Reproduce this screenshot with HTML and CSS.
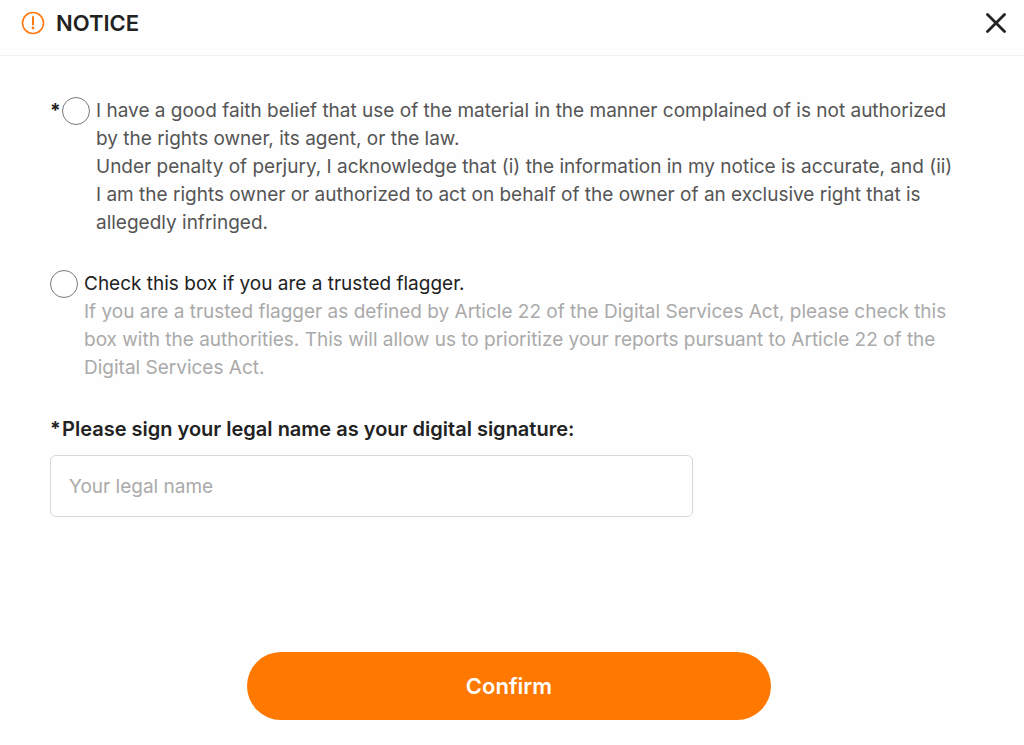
FILE: index.html
```html
<!DOCTYPE html>
<html lang="en">

<head>
    <meta charset="UTF-8">
    <meta name="viewport" content="width=device-width, initial-scale=1.0">
    <title>Notice</title>
    <link rel="stylesheet" href="styles.css">
</head>

<body>
    <div class="dialog" role="dialog" aria-labelledby="noticeTitle">
        <div class="header">
            <svg class="noticeIcon" viewBox="0 0 24 24" aria-hidden="true">
                <circle cx="12" cy="12" r="10.5" fill="none" stroke="#ff7a14" stroke-width="1.6" />
                <path d="M12 6v7.5" stroke="#ff7a14" stroke-width="2" stroke-linecap="round" />
                <circle cx="12" cy="17" r="1.4" fill="#ff7a14" />
            </svg>
            <h1 class="title" id="noticeTitle">NOTICE</h1>
            <button class="closeBtn" type="button" aria-label="Close">
                <svg viewBox="0 0 20 20" aria-hidden="true">
                    <path d="M1.5 1.5l17 17M18.5 1.5l-17 17" stroke="#222" stroke-width="2.8" stroke-linecap="round" />
                </svg>
            </button>
        </div>

        <form class="content">
            <div class="option">
                <span class="star">*</span>
                <input class="check" type="checkbox" id="goodFaith" required>
                <label class="statement" for="goodFaith">
                    I have a good faith belief that use of the material in the manner complained of is not authorized by the rights owner, its agent, or the law.<br>
                    Under penalty of perjury, I acknowledge that (i) the information in my notice is accurate, and (ii) I am the rights owner or authorized to act on behalf of the owner of an exclusive right that is allegedly infringed.
                </label>
            </div>

            <div class="option">
                <input class="check" type="checkbox" id="flagger" aria-describedby="flaggerHint">
                <div class="flagger">
                    <label class="flaggerLabel" for="flagger">Check this box if you are a trusted flagger.</label>
                    <p class="hint" id="flaggerHint">If you are a trusted flagger as defined by Article 22 of the Digital Services Act, please check this box with the authorities. This will allow us to prioritize your reports pursuant to Article 22 of the Digital Services Act.</p>
                </div>
            </div>

            <div class="signature">
                <div class="signatureTitle">
                    <span class="star">*</span>
                    <label for="legalName">Please sign your legal name as your digital signature:</label>
                </div>
                <input class="nameInput" type="text" id="legalName" placeholder="Your legal name" required>
            </div>

            <button class="confirmBtn" type="submit">Confirm</button>
        </form>
    </div>
</body>

</html>
```
FILE: styles.css
```css
* {
    margin: 0;
    padding: 0;
    box-sizing: border-box;
}

body {
    font-family: Inter, "Liberation Sans", sans-serif;
    font-size: 19px;
    line-height: 28px;
    color: #222;
    background-color: #fefefe;
}

.header {
    display: flex;
    align-items: center;
    padding: 9px 18px 18px 21px;
    border-bottom: 1px solid #f2f2f2;
}

.noticeIcon {
    width: 24px;
    height: 24px;
}

.title {
    margin-left: 11px;
    font-size: 22px;
    line-height: 28px;
    font-weight: 600;
}

.closeBtn {
    width: 20px;
    height: 20px;
    margin-left: auto;
    border: none;
    background: none;
    cursor: pointer;
}

.closeBtn svg {
    display: block;
    width: 100%;
}

.content {
    padding: 41px 56px 24px 50px;
}

.option {
    display: flex;
    align-items: flex-start;
    margin-bottom: 33px;
}

.star {
    width: 12px;
    flex-shrink: 0;
    font-size: 19px;
    font-weight: 700;
}

.check {
    appearance: none;
    width: 28px;
    height: 28px;
    margin-right: 6px;
    flex-shrink: 0;
    border: 1px solid #777;
    border-radius: 50%;
    background-color: #fff;
}

.check:checked {
    border-color: #ff7800;
    background-color: #ff7800;
}

.statement {
    padding-right: 8px;
    color: #555;
}

.flaggerLabel {
    display: block;
}

.hint {
    color: #aaa;
}

.signatureTitle {
    display: flex;
    font-size: 20px;
    font-weight: 600;
}

.nameInput {
    display: block;
    width: 70%;
    height: 62px;
    margin-top: 12px;
    padding: 0 18px;
    border: 1px solid #d8d8d8;
    border-radius: 6px;
    font: inherit;
    color: #222;
    background-color: #fff;
}

.nameInput::placeholder {
    color: #aaa;
}

.confirmBtn {
    display: block;
    width: 57%;
    height: 68px;
    margin: 135px auto 0;
    border: none;
    border-radius: 34px;
    font-family: inherit;
    font-size: 22px;
    font-weight: 600;
    color: #fff;
    background-color: #ff7800;
    cursor: pointer;
}
```
